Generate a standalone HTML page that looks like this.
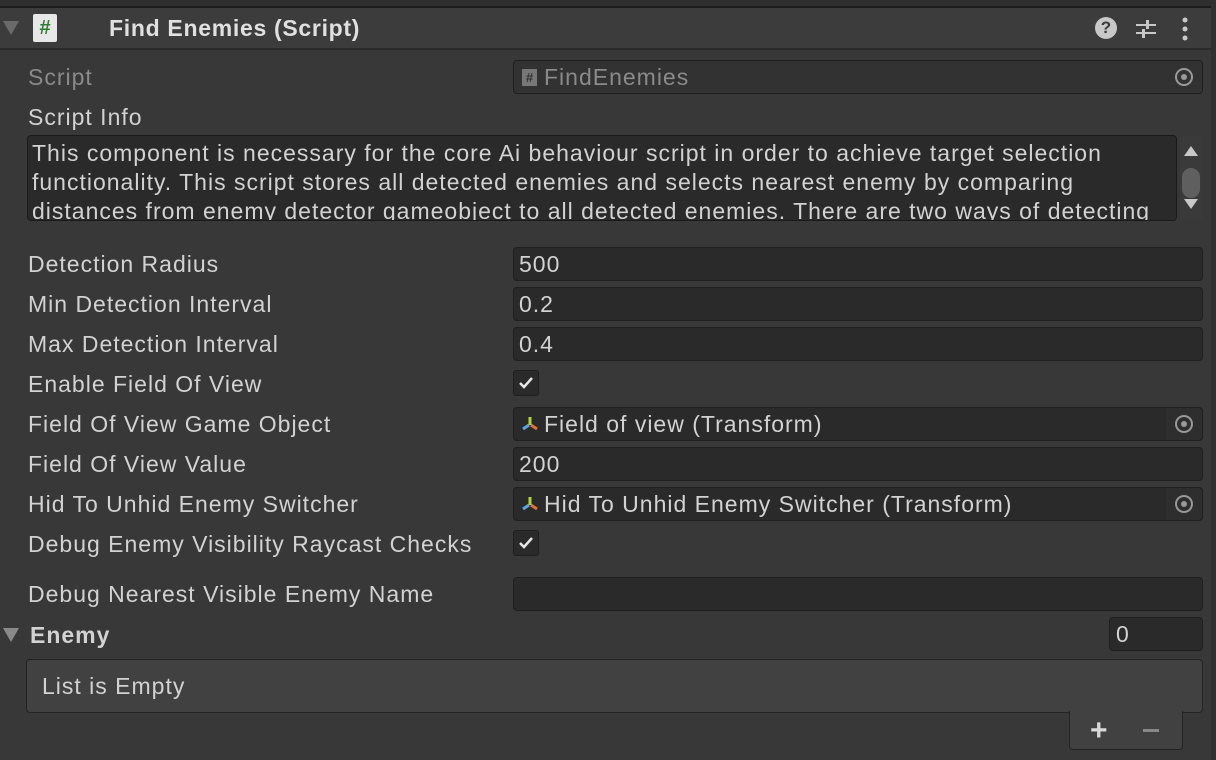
<!DOCTYPE html>
<html><head><style>
body{margin:0;width:1216px;height:760px;background:#383838;font-family:"Liberation Sans",sans-serif;color:#d2d2d2;font-size:23px;letter-spacing:1px;position:relative;overflow:hidden}
.a{position:absolute}
.lbl{position:absolute;left:28px;line-height:34px;white-space:nowrap}
.f{position:absolute;left:513px;width:683px;height:32px;background:#2a2a2a;border:1px solid #1f1f1f;border-radius:4px;line-height:32px;padding-left:5px;box-sizing:content-box;white-space:nowrap}
.tgt{position:absolute;right:0;top:0;width:36px;height:32px;background:#2e2e2e;border-radius:0 4px 4px 0}
.tgt:after{content:"";position:absolute;left:9px;top:7px;width:14px;height:14px;border:2px solid #999;border-radius:50%}
.tgt:before{content:"";position:absolute;left:15px;top:13px;width:6px;height:6px;background:#999;border-radius:50%}
.cb{position:absolute;left:513px;width:24px;height:24px;background:#2a2a2a;border:1px solid #1f1f1f;border-radius:3px}
</style></head><body>
<div class="a" style="left:0;top:0;width:1216px;height:6px;background:#2f2f2f"></div>
<div class="a" style="left:0;top:6px;width:1216px;height:2px;background:#1c1c1c"></div>
<div class="a" style="left:0;top:8px;width:1216px;height:40px;background:#3c3c3c;border-bottom:2px solid #2a2a2a"></div>
<div class="a" style="left:3px;top:21px;width:0;height:0;border-left:8px solid transparent;border-right:8px solid transparent;border-top:14px solid #6a6a6a"></div>
<div class="a" style="left:33px;top:14px;width:24px;height:28px;background:#e8e8e8;border-radius:2px;color:#2e7d32;font-weight:bold;font-size:20px;letter-spacing:0;text-align:center;line-height:28px">#</div>
<div class="a" style="left:109px;top:14px;font-weight:bold;font-size:23px;letter-spacing:0.7px;line-height:28px;color:#e0e0e0">Find Enemies (Script)</div>
<div class="a" style="left:1095px;top:17px;width:22px;height:22px;border-radius:50%;background:#c8c8c8;color:#3c3c3c;font-weight:bold;font-size:17px;letter-spacing:0;text-align:center;line-height:22px">?</div>
<svg class="a" style="left:1134px;top:17px" width="24" height="24"><path d="M2 8h20M2 16h20" stroke="#c8c8c8" stroke-width="2"/><rect x="12" y="3" width="3" height="9" fill="#c8c8c8"/><rect x="8" y="12" width="3" height="9" fill="#c8c8c8"/></svg>
<svg class="a" style="left:1178px;top:17px" width="14" height="24"><circle cx="7" cy="3" r="2.5" fill="#c8c8c8"/><circle cx="7" cy="12" r="2.5" fill="#c8c8c8"/><circle cx="7" cy="21" r="2.5" fill="#c8c8c8"/></svg>

<div class="lbl" style="top:60px;color:#8a8a8a">Script</div>
<div class="f" style="top:60px;color:#8a8a8a;background:#323232;padding-left:30px;width:658px"><span class="a" style="left:8px;top:8px;width:15px;height:17px;background:#777;color:#333;font-size:13px;letter-spacing:0;line-height:17px;text-align:center;font-weight:bold">#</span>FindEnemies<div class="tgt" style="background:#323232"></div></div>
<div class="lbl" style="top:100px">Script Info</div>
<div class="a" style="left:27px;top:135px;width:1150px;height:86px;background:#2a2a2a;border:1px solid #1a1a1a;border-radius:4px;overflow:hidden;padding:3px 4px;box-sizing:border-box;line-height:29px">This component is necessary for the core Ai behaviour script in order to achieve target selection functionality. This script stores all detected enemies and selects nearest enemy by comparing distances from enemy detector gameobject to all detected enemies. There are two ways of detecting</div>
<div class="a" style="left:1180px;top:136px;width:22px;height:84px;background:#3a3a3a"></div>
<div class="a" style="left:1184px;top:146px;border-left:7px solid transparent;border-right:7px solid transparent;border-bottom:10px solid #c8c8c8"></div>
<div class="a" style="left:1182px;top:168px;width:18px;height:30px;background:#5f5f5f;border-radius:9px"></div>
<div class="a" style="left:1184px;top:199px;border-left:7px solid transparent;border-right:7px solid transparent;border-top:10px solid #c8c8c8"></div>

<div class="lbl" style="top:247px">Detection Radius</div><div class="f" style="top:247px">500</div>
<div class="lbl" style="top:287px">Min Detection Interval</div><div class="f" style="top:287px">0.2</div>
<div class="lbl" style="top:327px">Max Detection Interval</div><div class="f" style="top:327px">0.4</div>
<div class="lbl" style="top:367px">Enable Field Of View</div><div class="cb" style="top:370px"><svg width="24" height="24"><path d="M6 12l4 4 8-9" stroke="#e6e6e6" stroke-width="2.5" fill="none"/></svg></div>
<div class="lbl" style="top:407px">Field Of View Game Object</div>
<div class="f" style="top:407px;padding-left:30px;width:658px"><svg class="a" style="left:6px;top:6px" width="20" height="20"><path d="M10 3v8" stroke="#b5d334" stroke-width="3"/><path d="M9 11l-6 4" stroke="#5aa8e0" stroke-width="3"/><path d="M11 11l6 4" stroke="#e0703a" stroke-width="3"/></svg>Field of view (Transform)<div class="tgt"></div></div>
<div class="lbl" style="top:447px">Field Of View Value</div><div class="f" style="top:447px">200</div>
<div class="lbl" style="top:487px">Hid To Unhid Enemy Switcher</div>
<div class="f" style="top:487px;padding-left:30px;width:658px"><svg class="a" style="left:6px;top:6px" width="20" height="20"><path d="M10 3v8" stroke="#b5d334" stroke-width="3"/><path d="M9 11l-6 4" stroke="#5aa8e0" stroke-width="3"/><path d="M11 11l6 4" stroke="#e0703a" stroke-width="3"/></svg>Hid To Unhid Enemy Switcher (Transform)<div class="tgt"></div></div>
<div class="lbl" style="top:527px">Debug Enemy Visibility Raycast Checks</div><div class="cb" style="top:530px"><svg width="24" height="24"><path d="M6 12l4 4 8-9" stroke="#e6e6e6" stroke-width="2.5" fill="none"/></svg></div>
<div class="lbl" style="top:577px">Debug Nearest Visible Enemy Name</div><div class="f" style="top:577px"></div>

<div class="a" style="left:3px;top:628px;border-left:8px solid transparent;border-right:8px solid transparent;border-top:14px solid #8a8a8a"></div>
<div class="lbl" style="top:618px;left:30px;font-weight:bold">Enemy</div>
<div class="f" style="top:617px;left:1109px;width:86px;padding-left:6px">0</div>
<div class="a" style="left:26px;top:659px;width:1177px;height:54px;background:#414141;border:1px solid #232323;border-radius:4px;box-sizing:border-box;padding-left:15px;line-height:52px">List is Empty</div>
<div class="a" style="left:1069px;top:711px;width:114px;height:39px;background:#414141;border:1px solid #232323;border-top:none;border-radius:0 0 4px 4px;box-sizing:border-box"></div>
<div class="a" style="left:1090px;top:716px;font-size:30px;font-weight:bold;color:#d8d8d8;line-height:30px">+</div>
<div class="a" style="left:1143px;top:729px;width:16px;height:3px;background:#888"></div>
<div class="a" style="left:1211px;top:0;width:5px;height:760px;background:#303030"></div>
</body></html>
